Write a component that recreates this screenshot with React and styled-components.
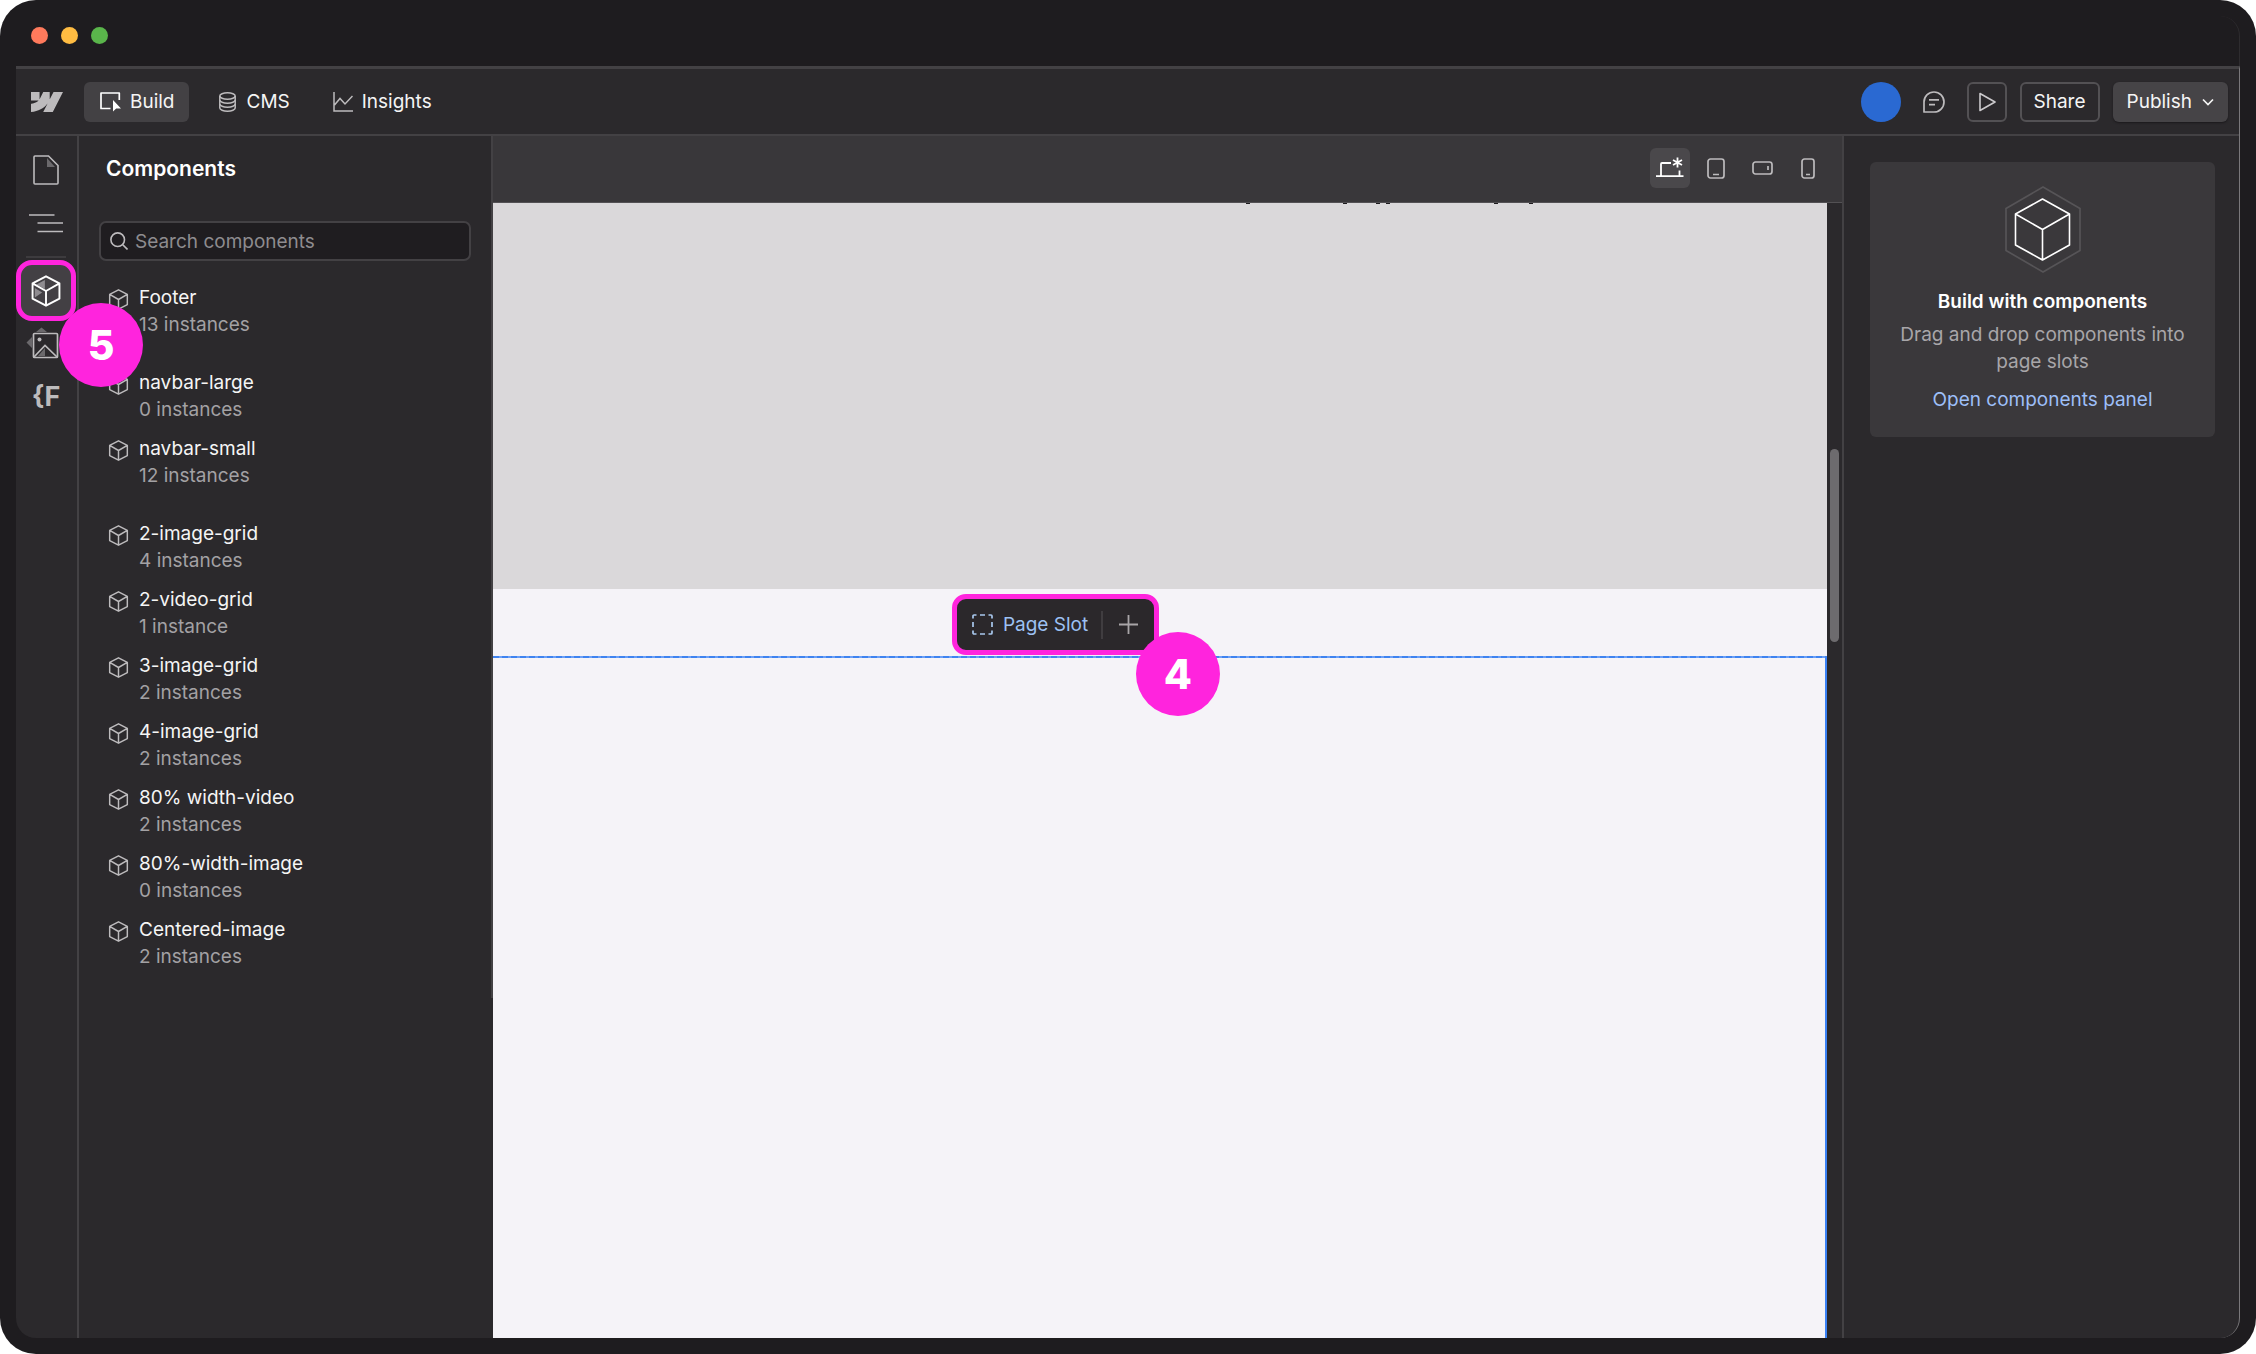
import styled, { createGlobalStyle } from "styled-components";
import { useState } from "react";

const GlobalStyle = createGlobalStyle`
  * {
    box-sizing: border-box;
  }
  body {
    margin: 0;
    background: #fff;
    color: #f5f5f5;
    font-family: Inter, "Liberation Sans", sans-serif;
    font-size: 19px;
    line-height: 27px;
  }
  button,
  input {
    font: inherit;
    color: inherit;
  }
`;

const Window = styled.div`
  display: flex;
  flex-direction: column;
  min-height: 100vh;
  padding: 16px;
  border-radius: 36px;
  background: #1e1c1f;
`;

const TitleBar = styled.div`
  display: flex;
  gap: 13px;
  height: 50px;
  padding: 11px 15px;
  border-top-right-radius: 20px;
  border-right: 1px solid #2e2c2f;
`;

const Dot = styled.span`
  width: 17px;
  height: 17px;
  border-radius: 50%;
  background: ${({ $color }) => $color};
`;

const AppFrame = styled.div`
  display: flex;
  flex: 1;
  flex-direction: column;
  overflow: hidden;
  border-top: 3px solid #434144;
  border-right: 1px solid #7a787b;
  border-radius: 0 0 20px 20px;
  background: #2b292c;
`;

const TopBar = styled.header`
  display: flex;
  align-items: center;
  justify-content: space-between;
  height: 67px;
  padding: 0 11px 0 15px;
  border-bottom: 2px solid #434144;
`;

const Nav = styled.nav`
  display: flex;
  align-items: center;
  gap: 13px;
`;

const Logo = styled.svg`
  width: 32px;
  height: 20px;
  margin-right: 8px;
  fill: #bdbbbd;
`;

const NavButton = styled.button`
  display: flex;
  align-items: center;
  gap: 9px;
  height: 40px;
  padding: 0 14px 0 16px;
  border: 0;
  border-radius: 6px;
  background: ${({ $active }) => ($active ? "#434144" : "transparent")};
`;

const Actions = styled.div`
  display: flex;
  align-items: center;
  gap: 13px;
`;

const Avatar = styled.span`
  width: 40px;
  height: 40px;
  border-radius: 50%;
  background: #2a69d2;
`;

const IconButton = styled.button`
  display: flex;
  align-items: center;
  justify-content: center;
  width: 40px;
  height: 40px;
  padding: 0;
  border: ${({ $outlined }) => ($outlined ? "2px solid #535154" : "0")};
  border-radius: 6px;
  background: ${({ $active }) => ($active ? "#4a484b" : "transparent")};
`;

const ShareButton = styled.button`
  height: 40px;
  padding: 0 12px;
  border: 2px solid #535154;
  border-radius: 6px;
  background: transparent;
`;

const PublishButton = styled.button`
  display: flex;
  align-items: center;
  gap: 10px;
  height: 40px;
  padding: 0 14px;
  border: 0;
  border-radius: 6px;
  background: #464447;
  box-shadow: 0 1px 2px #1b191c;
`;

const Workspace = styled.div`
  display: flex;
  flex: 1;
`;

const Rail = styled.aside`
  display: flex;
  flex-direction: column;
  align-items: center;
  width: 63px;
  padding: 7px 1px 0 0;
  border-right: 2px solid #434144;
`;

const RailButton = styled.button`
  position: relative;
  display: flex;
  align-items: center;
  justify-content: center;
  width: 100%;
  height: 53px;
  padding: 0;
  border: 0;
  background: transparent;
`;

const RailDivider = styled.hr`
  width: 40px;
  height: 2px;
  margin: 7px 0 6px;
  border: 0;
  background: #3d3b3e;
`;

const Highlight = styled.span`
  position: absolute;
  inset: -4px 0;
  display: flex;
  align-items: center;
  justify-content: center;
  border: 5px solid #ff24dd;
  border-radius: 16px;
  background: #434044;
`;

const Badge = styled.span`
  position: absolute;
  z-index: 1;
  top: ${({ $top }) => $top};
  left: ${({ $left }) => $left};
  display: flex;
  align-items: center;
  justify-content: center;
  width: 84px;
  height: 84px;
  border-radius: 50%;
  background: #ff24dd;
  color: #fff;
  font-size: 41px;
  font-weight: 800;
`;

const Panel = styled.section`
  width: 414px;
`;

const PanelBody = styled.div`
  padding: 19px 20px 28px;
  border-right: 2px solid #434144;
`;

const PanelTitle = styled.h2`
  margin: 0 0 39px 7px;
  font-size: 21px;
  font-weight: 600;
  line-height: 27px;
  color: #fff;
`;

const SearchBox = styled.label`
  display: flex;
  align-items: center;
  gap: 7px;
  height: 40px;
  padding: 0 9px;
  border: 2px solid #434144;
  border-radius: 7px;
  background: #1f1d20;
`;

const SearchInput = styled.input`
  flex: 1;
  min-width: 0;
  padding: 0;
  border: 0;
  outline: 0;
  background: transparent;

  &::placeholder {
    color: #8e8c8f;
    opacity: 1;
  }
`;

const ComponentGroup = styled.ul`
  display: flex;
  flex-direction: column;
  gap: 12px;
  margin: 23px 0 0;
  padding: 0 9px;
  list-style: none;

  & + & {
    margin-top: 31px;
  }
`;

const ComponentItem = styled.li`
  display: flex;
  align-items: flex-start;
  gap: 10px;

  svg {
    flex-shrink: 0;
    margin-top: 5px;
  }
`;

const ComponentName = styled.div`
  line-height: 27px;
`;

const ComponentCount = styled.div`
  color: #a3a1a4;
  line-height: 27px;
`;

const Stage = styled.main`
  display: flex;
  flex: 1;
  flex-direction: column;
`;

const StageBar = styled.div`
  display: flex;
  align-items: center;
  justify-content: flex-end;
  gap: 6px;
  height: 67px;
  padding: 0 14px 2px 0;
  border-bottom: 1px solid #535154;
  background: #39373a;
`;

const StageBody = styled.div`
  display: flex;
  flex: 1;
`;

const Canvas = styled.div`
  display: flex;
  flex: 1;
  flex-direction: column;
  background: #f5f3f8;
`;

const GrayBlock = styled.div`
  height: 386px;
  padding-left: 56%;
  background: #dad8da;

  svg {
    display: block;
  }
`;

const SlotStrip = styled.div`
  height: 67px;
  padding: 5px 0 0 34.4%;
`;

const SlotTag = styled.div`
  position: relative;
  display: inline-flex;
  align-items: center;
  height: 61px;
  padding: 0 13px 0 15px;
  border: 5px solid #ff24dd;
  border-radius: 14px;
  background: #2b282b;
  color: #9dc1f3;
`;

const SlotName = styled.span`
  margin: 0 13px 0 10px;
`;

const SlotAdd = styled.button`
  display: flex;
  align-items: center;
  height: 28px;
  padding: 0 3px 0 16px;
  border: 0;
  border-left: 2px solid #403d40;
  background: transparent;
`;

const SlotLine = styled.div`
  height: 2px;
  background: repeating-linear-gradient(
    90deg,
    #3f83f0 0 6px,
    #6b9ff6 6px 9px
  );
`;

const SlotArea = styled.div`
  flex: 1;
  border-right: 2px solid #3b82f6;
`;

const ScrollTrack = styled.div`
  width: 15px;
  padding: 246px 3px 0;
`;

const ScrollThumb = styled.div`
  height: 193px;
  border-radius: 5px;
  background: #6d6b6e;
`;

const Inspector = styled.aside`
  width: 397px;
  padding: 26px 24px 26px 26px;
  border-left: 2px solid #434144;
`;

const EmptyCard = styled.div`
  display: flex;
  flex-direction: column;
  align-items: center;
  padding: 24px;
  border-radius: 6px;
  background: #3a383b;
  text-align: center;
`;

const CardTitle = styled.h3`
  margin: 15px 0 6px;
  font-size: 19px;
  font-weight: 600;
  color: #fff;
`;

const CardText = styled.p`
  margin: 0 0 11px;
  color: #a8a6a9;
`;

const CardLink = styled.a`
  color: #9dbff8;
  text-decoration: none;
`;

function CubeIcon({ size, color = "#bdbbbd", shaded }) {
  return (
    <svg width={size} height={size} viewBox="0 0 20 20" fill="none">
      {shaded && (
        <path d="M9.3 3.2v5.6L4 6ZM3 8.2l4.6 2.7L3 14Z" fill="#8f8c90" />
      )}
      <path
        d="M10 0.8 18.4 5.2V14.8L10 19.2 1.6 14.8V5.2ZM1.6 5.2 10 10 18.4 5.2M10 10V19.2"
        stroke={color}
        strokeWidth={shaded ? 1.2 : 1.4}
        strokeLinejoin="round"
      />
    </svg>
  );
}

function BuildIcon() {
  return (
    <svg width="21" height="20" viewBox="0 0 21 20" fill="none">
      <path
        d="M19.3 8V1H1v15.5h9.5"
        stroke="#fff"
        strokeWidth="1.7"
        strokeLinejoin="round"
      />
      <path d="M13 8v11.5l3.2-3H21Z" fill="#fff" />
    </svg>
  );
}

function DatabaseIcon() {
  return (
    <svg width="20" height="20" viewBox="0 0 20 20" fill="none">
      <g stroke="#bdbbbd" strokeWidth="1.5">
        <ellipse cx="9.5" cy="4" rx="7.7" ry="3.2" />
        <path d="M1.8 4v12c0 1.7 3.4 3.2 7.7 3.2s7.7-1.5 7.7-3.2V4" />
        <path d="M1.8 8c0 1.7 3.4 3.2 7.7 3.2s7.7-1.5 7.7-3.2M1.8 12c0 1.7 3.4 3.2 7.7 3.2s7.7-1.5 7.7-3.2" />
      </g>
    </svg>
  );
}

function InsightsIcon() {
  return (
    <svg width="20" height="20" viewBox="0 0 20 20" fill="none">
      <path
        d="M1 0v19h19M1.5 13 7 6.5l5 5.5 7.5-8"
        stroke="#bdbbbd"
        strokeWidth="1.5"
      />
    </svg>
  );
}

function CommentIcon() {
  return (
    <svg width="22" height="22" viewBox="0 0 22 22" fill="none">
      <path
        d="M1 21V11a10 10 0 1 1 10 10ZM6 8.8h10M6 13.6h6"
        stroke="#bdbbbd"
        strokeWidth="1.7"
        strokeLinejoin="round"
      />
    </svg>
  );
}

function PlayIcon() {
  return (
    <svg width="18" height="20" viewBox="0 0 18 20" fill="none">
      <path
        d="M2 1.5 17 10 2 18.5Z"
        stroke="#cbc9cc"
        strokeWidth="1.6"
        strokeLinejoin="round"
      />
    </svg>
  );
}

function ChevronIcon() {
  return (
    <svg width="12" height="8" viewBox="0 0 12 8" fill="none">
      <path d="m1 1.5 5 5 5-5" stroke="#f5f5f5" strokeWidth="1.7" />
    </svg>
  );
}

function SearchIcon() {
  return (
    <svg width="18" height="18" viewBox="0 0 18 18" fill="none">
      <circle cx="7.7" cy="7.7" r="6.8" stroke="#bdbbbd" strokeWidth="1.6" />
      <path d="m12.5 12.5 5 5" stroke="#bdbbbd" strokeWidth="1.6" />
    </svg>
  );
}

function PageIcon() {
  return (
    <svg width="26" height="30" viewBox="0 0 26 30" fill="none">
      <path d="M14 3v9h8Z" fill="#6b696c" />
      <path
        d="M2 1h13.5L25 10.5V28a1 1 0 0 1-1 1H2a1 1 0 0 1-1-1V2a1 1 0 0 1 1-1Z"
        stroke="#bdbbbd"
        strokeWidth="1.6"
      />
    </svg>
  );
}

function NavigatorIcon() {
  return (
    <svg width="34" height="20" viewBox="0 0 34 20" fill="none">
      <path
        d="M0 2h25.5M8.5 10H34M8.5 18.5H34"
        stroke="#bdbbbd"
        strokeWidth="1.6"
      />
    </svg>
  );
}

function AssetsIcon() {
  return (
    <svg width="40" height="34" viewBox="0 0 40 34" fill="none">
      <path d="M10 5 15.5 0.5 21 5ZM6 10v11L0.5 15.5Z" fill="#6b696c" />
      <path d="m12 29 7-8v8Z" fill="#6b696c" />
      <rect
        x="7.5"
        y="6.5"
        width="24"
        height="24"
        rx="1"
        stroke="#bdbbbd"
        strokeWidth="1.7"
      />
      <path d="m8 30 11-11.5L31 30" stroke="#bdbbbd" strokeWidth="1.7" />
      <circle cx="13.5" cy="12.5" r="2" fill="#bdbbbd" />
    </svg>
  );
}

const RailGlyph = styled.span`
  color: #bdbbbd;
  font-size: 27px;
  font-weight: 700;
`;

function DesktopIcon() {
  return (
    <svg width="28" height="22" viewBox="0 0 28 22" fill="none">
      <path
        d="M0 19.2h27.5M5 19V7a1 1 0 0 1 1-1h9M23.5 13.5V19"
        stroke="#fff"
        strokeWidth="1.8"
      />
      <path
        d="M21.5 0.5v10M17 3l9 5M26 3l-9 5"
        stroke="#fff"
        strokeWidth="1.8"
      />
    </svg>
  );
}

function DeviceIcon({ width, height, mark }) {
  return (
    <svg width={width} height={height} fill="none">
      <rect
        x="1"
        y="1"
        width={width - 2}
        height={height - 2}
        rx="2.5"
        stroke="#bdbbbd"
        strokeWidth="1.7"
      />
      <path d={mark} stroke="#bdbbbd" strokeWidth="1.7" />
    </svg>
  );
}

function SlotIcon() {
  return (
    <svg width="21" height="21" viewBox="0 0 21 21" fill="none">
      <path
        d="M1 4.5V2a1 1 0 0 1 1-1h2.5M8 1h5M16.5 1H19a1 1 0 0 1 1 1v2.5M20 8v5M20 16.5V19a1 1 0 0 1-1 1h-2.5M13 20H8M4.5 20H2a1 1 0 0 1-1-1v-2.5M1 13V8"
        stroke="#a9c8ee"
        strokeWidth="1.7"
      />
    </svg>
  );
}

function PlusIcon() {
  return (
    <svg width="19" height="19" viewBox="0 0 19 19" fill="none">
      <path d="M9.5 0v19M0 9.5h19" stroke="#a9a5a8" strokeWidth="1.8" />
    </svg>
  );
}

function HexCubeIcon() {
  return (
    <svg width="76" height="87" viewBox="0 0 76 87" fill="none">
      <path
        d="M38 1 75 22.5v42L38 86 1 64.5v-42Z"
        stroke="#565457"
        strokeWidth="1.7"
      />
      <path
        d="M37.500 13 64.500 28v31L37.500 74 10.500 59V28ZM10.500 28l27 15.500L64.500 28M37.500 43.500V74"
        stroke="#fff"
        strokeWidth="1.6"
        strokeLinejoin="round"
      />
    </svg>
  );
}

// bottoms of the heading letters that are scrolled under the stage bar
function ClippedDescenders() {
  return (
    <svg width="300" height="3" viewBox="0 0 300 3">
      <path
        d="M6 0h4v1h-4ZM103 0h4v1h-4ZM136 0h4v1h-4ZM146 0h4v1h-4ZM254 0h4v1h-4ZM289 0h4v1h-4Z"
        fill="#1e1c1f"
      />
    </svg>
  );
}

const GROUPS = [
  [{ name: "Footer", count: 13 }],
  [
    { name: "navbar-large", count: 0 },
    { name: "navbar-small", count: 12 },
  ],
  [
    { name: "2-image-grid", count: 4 },
    { name: "2-video-grid", count: 1 },
    { name: "3-image-grid", count: 2 },
    { name: "4-image-grid", count: 2 },
    { name: "80% width-video", count: 2 },
    { name: "80%-width-image", count: 0 },
    { name: "Centered-image", count: 2 },
  ],
];

function ComponentRow({ name, count }) {
  return (
    <ComponentItem>
      <CubeIcon size={21} />
      <div>
        <ComponentName>{name}</ComponentName>
        <ComponentCount>
          {count} {count === 1 ? "instance" : "instances"}
        </ComponentCount>
      </div>
    </ComponentItem>
  );
}

function App() {
  const [search, setSearch] = useState("");

  const handleSearchChange = (e) => {
    setSearch(e.target.value);
  };

  const groups = GROUPS.map((group) =>
    group.filter((item) => item.name.toLowerCase().includes(search.toLowerCase()))
  ).filter((group) => group.length > 0);

  return (
    <Window>
      <GlobalStyle />
      <TitleBar>
        <Dot $color="#ff7a5c" />
        <Dot $color="#ffbc42" />
        <Dot $color="#5ab54b" />
      </TitleBar>
      <AppFrame>
        <TopBar>
          <Nav>
            <Logo viewBox="0 4.5 24 15">
              <path d="m24 4.515-7.658 14.97H9.149l3.205-6.204h-.144C9.566 16.713 5.621 18.973 0 19.485v-6.118s3.596-.213 5.71-2.435H0V4.515h6.417v5.278l.144-.001 2.622-5.277h4.854v5.244h.144l2.72-5.244H24Z" />
            </Logo>
            <NavButton $active>
              <BuildIcon />
              Build
            </NavButton>
            <NavButton>
              <DatabaseIcon />
              CMS
            </NavButton>
            <NavButton>
              <InsightsIcon />
              Insights
            </NavButton>
          </Nav>
          <Actions>
            <Avatar />
            <IconButton aria-label="Comments">
              <CommentIcon />
            </IconButton>
            <IconButton $outlined aria-label="Preview">
              <PlayIcon />
            </IconButton>
            <ShareButton>Share</ShareButton>
            <PublishButton>
              Publish
              <ChevronIcon />
            </PublishButton>
          </Actions>
        </TopBar>
        <Workspace>
          <Rail>
            <RailButton aria-label="Pages">
              <PageIcon />
            </RailButton>
            <RailButton aria-label="Navigator">
              <NavigatorIcon />
            </RailButton>
            <RailDivider />
            <RailButton aria-label="Components">
              <Highlight>
                <CubeIcon size={32} color="#fff" shaded />
              </Highlight>
              <Badge $top="39px" $left="43px">
                5
              </Badge>
            </RailButton>
            <RailButton aria-label="Assets">
              <AssetsIcon />
            </RailButton>
            <RailButton aria-label="Finsweet">
              <RailGlyph>{"{F"}</RailGlyph>
            </RailButton>
          </Rail>
          <Panel>
            <PanelBody>
              <PanelTitle>Components</PanelTitle>
              <SearchBox>
                <SearchIcon />
                <SearchInput
                  type="text"
                  aria-label="Search components"
                  placeholder="Search components"
                  value={search}
                  onChange={handleSearchChange}
                />
              </SearchBox>
              {groups.map((group) => (
                <ComponentGroup key={group[0].name}>
                  {group.map((item) => (
                    <ComponentRow key={item.name} {...item} />
                  ))}
                </ComponentGroup>
              ))}
            </PanelBody>
          </Panel>
          <Stage>
            <StageBar>
              <IconButton $active aria-label="Desktop">
                <DesktopIcon />
              </IconButton>
              <IconButton aria-label="Tablet">
                <DeviceIcon width={18} height={21} mark="M6 16.5h6" />
              </IconButton>
              <IconButton aria-label="Mobile landscape">
                <DeviceIcon width={21} height={14} mark="M16 5v4" />
              </IconButton>
              <IconButton aria-label="Mobile portrait">
                <DeviceIcon width={14} height={21} mark="M5 16.5h4" />
              </IconButton>
            </StageBar>
            <StageBody>
              <Canvas>
                <GrayBlock>
                  <ClippedDescenders />
                </GrayBlock>
                <SlotStrip>
                  <SlotTag>
                    <SlotIcon />
                    <SlotName>Page Slot</SlotName>
                    <SlotAdd aria-label="Add component">
                      <PlusIcon />
                    </SlotAdd>
                    <Badge $top="33px" $left="179px">
                      4
                    </Badge>
                  </SlotTag>
                </SlotStrip>
                <SlotLine />
                <SlotArea />
              </Canvas>
              <ScrollTrack>
                <ScrollThumb />
              </ScrollTrack>
            </StageBody>
          </Stage>
          <Inspector>
            <EmptyCard>
              <HexCubeIcon />
              <CardTitle>Build with components</CardTitle>
              <CardText>Drag and drop components into page slots</CardText>
              <CardLink href="#components">Open components panel</CardLink>
            </EmptyCard>
          </Inspector>
        </Workspace>
      </AppFrame>
    </Window>
  );
}

export default App;
